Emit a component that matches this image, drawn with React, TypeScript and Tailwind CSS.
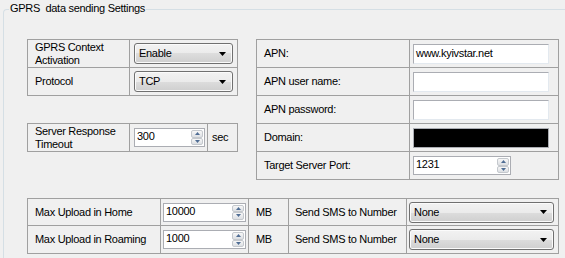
function DropArrow() {
  return (
    <svg width="7" height="4" viewBox="0 0 7 4" className="shrink-0">
      <path d="M0 0h7L3.5 4z" fill="#000" />
    </svg>
  );
}

function ComboBox({ value, className }: { value: string; className: string }) {
  return (
    <div
      className={`flex items-center h-[21px] rounded-[3px] border border-[#707070] bg-[linear-gradient(#f2f2f2_0%,#ebebeb_50%,#dddddd_50%,#cfcfcf_100%)] shadow-[inset_0_0_0_1px_#fbfbfb] pl-[4px] pr-[6px] ${className}`}
    >
      <span className="flex-1 leading-[13px]">{value}</span>
      <DropArrow />
    </div>
  );
}

function SpinHalf({ up }: { up?: boolean }) {
  return (
    <div className="flex-1 flex items-center justify-center rounded-[2px] border border-[#c4c8cd] bg-[linear-gradient(#f7f7f7,#dcdfe3)]">
      <svg width="5" height="3" viewBox="0 0 5 3">
        <path d={up ? "M0 3h5L2.5 0z" : "M0 0h5L2.5 3z"} fill="#4f6d94" />
      </svg>
    </div>
  );
}

function Spinner({ value, className }: { value: string; className: string }) {
  return (
    <div className={`flex h-[19px] border border-[#abadb3] bg-white ${className}`}>
      <span className="flex-1 pl-[2px] leading-[15px]">{value}</span>
      <div className="flex flex-col w-[14px] p-[1px] gap-0">
        <SpinHalf up />
        <SpinHalf />
      </div>
    </div>
  );
}

function TextBox({ value, dark }: { value?: string; dark?: boolean }) {
  return (
    <div
      className={`h-[20px] w-[136px] border flex items-center pl-[2px] ${
        dark ? "bg-black border-[#abadb3]" : "bg-white border-[#abadb3] border-b-[#e3e9ef] border-r-[#e3e9ef]"
      }`}
    >
      {value}
    </div>
  );
}

const cell = "flex items-center border-r border-b border-[#a0a0a0]";

export default function App() {
  return (
    <div className="w-[565px] h-[258px] overflow-hidden bg-[#f0f0f0] text-black text-[11px] tracking-[-0.3px] font-['Liberation_Sans',Arial,sans-serif]">
      <div className="relative ml-[3px] mt-[9px] w-[620px] h-[300px] border-l border-t border-[#d5dfe5] rounded-tl-[4px] pt-[29px] pl-[23px]">
        <span className="absolute left-[5px] -top-[8px] px-[1px] bg-[#f0f0f0] leading-[13px] whitespace-pre">
          {"GPRS  data sending Settings"}
        </span>

        <div className="flex gap-[18px]">
          <div className="flex flex-col w-[211px]">
            <div className="grid grid-cols-[102px_108px] grid-rows-[28px_28px] border-l border-t border-[#a0a0a0]">
              <div className={`${cell} pl-[7px] leading-[13px]`}>
                GPRS Context
                <br />
                Activation
              </div>
              <div className={`${cell} pl-[4px]`}>
                <ComboBox value="Enable" className="w-[99px]" />
              </div>
              <div className={`${cell} pl-[7px]`}>Protocol</div>
              <div className={`${cell} pl-[4px]`}>
                <ComboBox value="TCP" className="w-[99px]" />
              </div>
            </div>

            <div className="mt-[27px] grid grid-cols-[102px_78px_30px] grid-rows-[28px] border-l border-t border-[#a0a0a0]">
              <div className={`${cell} pl-[7px] leading-[13px]`}>
                Server Response
                <br />
                Timeout
              </div>
              <div className={`${cell} pl-[4px]`}>
                <Spinner value="300" className="w-[71px]" />
              </div>
              <div className={`${cell} pl-[4px]`}>sec</div>
            </div>
          </div>

          <div className="grid grid-cols-[153px_149px] grid-rows-[repeat(5,28px)] w-[303px] h-[141px] border-l border-t border-[#a0a0a0]">
            <div className={`${cell} pl-[7px]`}>APN:</div>
            <div className={`${cell} pl-[3px]`}>
              <TextBox value="www.kyivstar.net" />
            </div>
            <div className={`${cell} pl-[7px]`}>APN user name:</div>
            <div className={`${cell} pl-[3px]`}>
              <TextBox />
            </div>
            <div className={`${cell} pl-[7px]`}>APN password:</div>
            <div className={`${cell} pl-[3px]`}>
              <TextBox />
            </div>
            <div className={`${cell} pl-[7px]`}>Domain:</div>
            <div className={`${cell} pl-[3px]`}>
              <TextBox dark />
            </div>
            <div className={`${cell} pl-[7px]`}>Target Server Port:</div>
            <div className={`${cell} pl-[3px]`}>
              <Spinner value="1231" className="w-[98px]" />
            </div>
          </div>
        </div>

        <div className="mt-[18px] grid grid-cols-[133px_88px_40px_118px_152px] grid-rows-[27px_28px] w-[532px] border-l border-t border-[#a0a0a0]">
          <div className={`${cell} pl-[7px]`}>Max Upload in Home</div>
          <div className={`${cell} pl-[2px]`}>
            <Spinner value="10000" className="w-[83px]" />
          </div>
          <div className={`${cell} pl-[7px]`}>MB</div>
          <div className={`${cell} pl-[6px]`}>Send SMS to Number</div>
          <div className={`${cell} pl-[2px]`}>
            <ComboBox value="None" className="w-[145px]" />
          </div>

          <div className={`${cell} pl-[7px]`}>Max Upload in Roaming</div>
          <div className={`${cell} pl-[2px]`}>
            <Spinner value="1000" className="w-[83px]" />
          </div>
          <div className={`${cell} pl-[7px]`}>MB</div>
          <div className={`${cell} pl-[6px]`}>Send SMS to Number</div>
          <div className={`${cell} pl-[2px]`}>
            <ComboBox value="None" className="w-[145px]" />
          </div>
        </div>
      </div>
    </div>
  );
}
